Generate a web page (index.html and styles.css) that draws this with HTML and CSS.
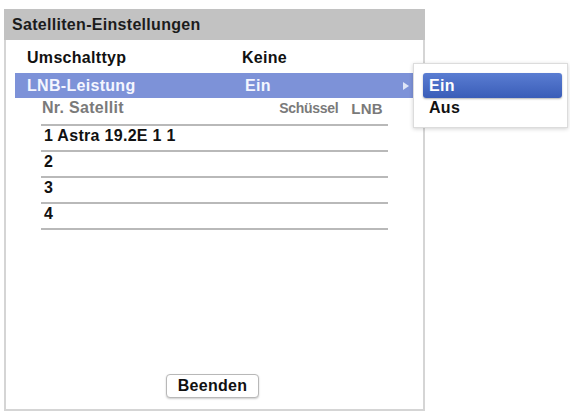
FILE: index.html
```html
<!DOCTYPE html>
<html lang="de">
<head>
<meta charset="utf-8">
<title>Satelliten-Einstellungen</title>
<link rel="stylesheet" href="styles.css">
</head>
<body>
<div class="screen">
  <div class="panel">
    <div class="panel-header">Satelliten-Einstellungen</div>
    <div class="panel-body">
      <div class="setting">
        <span class="setting-label">Umschalttyp</span>
        <span class="setting-value">Keine</span>
      </div>
      <div class="setting setting-active">
        <span class="setting-label">LNB-Leistung</span>
        <span class="setting-value setting-value-ein">Ein</span>
        <span class="setting-arrow"></span>
      </div>
      <div class="sat-table">
        <div class="sat-row sat-head">
          <span class="sat-name">Nr. Satellit</span>
          <span class="sat-dish">Schüssel</span>
          <span class="sat-lnb">LNB</span>
        </div>
        <div class="sat-row"><span class="sat-name">1 Astra 19.2E 1 1</span></div>
        <div class="sat-row"><span class="sat-name">2</span></div>
        <div class="sat-row"><span class="sat-name">3</span></div>
        <div class="sat-row"><span class="sat-name">4</span></div>
      </div>
      <div class="footer">
        <div class="button">Beenden</div>
      </div>
    </div>
  </div>
  <div class="popup">
    <div class="popup-item popup-item-selected">Ein</div>
    <div class="popup-item">Aus</div>
  </div>
</div>
</body>
</html>
```
FILE: styles.css
```css
html, body {
  margin: 0;
  padding: 0;
  background: #ffffff;
}

body {
  width: 570px;
  height: 412px;
  overflow: hidden;
  font-family: "Liberation Sans", Arial, sans-serif;
  font-weight: bold;
  font-size: 16px;
  letter-spacing: 0.3px;
  color: #111111;
}

.screen {
  position: relative;
  display: flow-root;
  width: 570px;
  height: 412px;
}

.panel {
  margin: 9px 0 0 4px;
  width: 421px;
  display: flex;
  flex-direction: column;
}

.panel-header {
  height: 31px;
  background: #c2c2c2;
  padding-left: 8px;
  display: flex;
  align-items: center;
  color: #1c1c1c;
}

.panel-body {
  height: 371px;
  box-sizing: border-box;
  border: 2px solid #d5d5d5;
  border-top: none;
  padding-top: 6px;
  display: flex;
  flex-direction: column;
}

.setting {
  margin: 0 10px 0 9px;
  height: 24px;
  padding-left: 12px;
  display: flex;
  align-items: center;
}

.setting-active {
  margin-top: 3px;
  height: 25px;
  background: #7d92d8;
  color: #f4f6ff;
}

.setting-label {
  width: 215px;
}

.setting-value-ein {
  padding-left: 3px;
}

.setting-arrow {
  margin-left: auto;
  margin-right: 4px;
  width: 0;
  height: 0;
  border-top: 4px solid transparent;
  border-bottom: 4px solid transparent;
  border-left: 6px solid #dfe5f7;
}

.sat-table {
  margin: 2px 0 0 35px;
  width: 347px;
  display: flex;
  flex-direction: column;
}

.sat-row {
  height: 26px;
  box-sizing: border-box;
  border-bottom: 2px solid #b9b9b9;
  padding: 0 0 4px 3px;
  display: flex;
  align-items: center;
}

.sat-head {
  padding-bottom: 8px;
  padding-left: 1px;
  color: #7a7a7a;
}

.sat-dish {
  margin-left: auto;
  font-size: 14px;
  letter-spacing: -0.3px;
}

.sat-lnb {
  margin-left: 13px;
  margin-right: 5px;
  font-size: 15px;
}

.footer {
  margin-top: auto;
  padding-bottom: 11px;
  display: flex;
  justify-content: center;
  padding-right: 4px;
}

.button {
  width: 93px;
  height: 24px;
  box-sizing: border-box;
  border: 1px solid #b8b8b8;
  border-radius: 4px;
  box-shadow: 0 1px 2px rgba(0, 0, 0, 0.2);
  background: #ffffff;
  display: flex;
  align-items: center;
  justify-content: center;
  padding-bottom: 1px;
}

.popup {
  position: absolute;
  left: 413px;
  top: 63px;
  width: 155px;
  height: 65px;
  box-sizing: border-box;
  background: #ffffff;
  border: 1px solid #dcdcdc;
  box-shadow: 0 1px 4px rgba(0, 0, 0, 0.18);
  padding: 9px 5px 0 9px;
  display: flex;
  flex-direction: column;
}

.popup-item {
  height: 20px;
  padding-left: 6px;
  display: flex;
  align-items: center;
}

.popup-item-selected {
  height: 25px;
  border-radius: 3px;
  background: linear-gradient(#5a7dd2, #3a5db8);
  box-shadow: 0 1px 2px rgba(0, 0, 0, 0.3);
  color: #ffffff;
}
```
